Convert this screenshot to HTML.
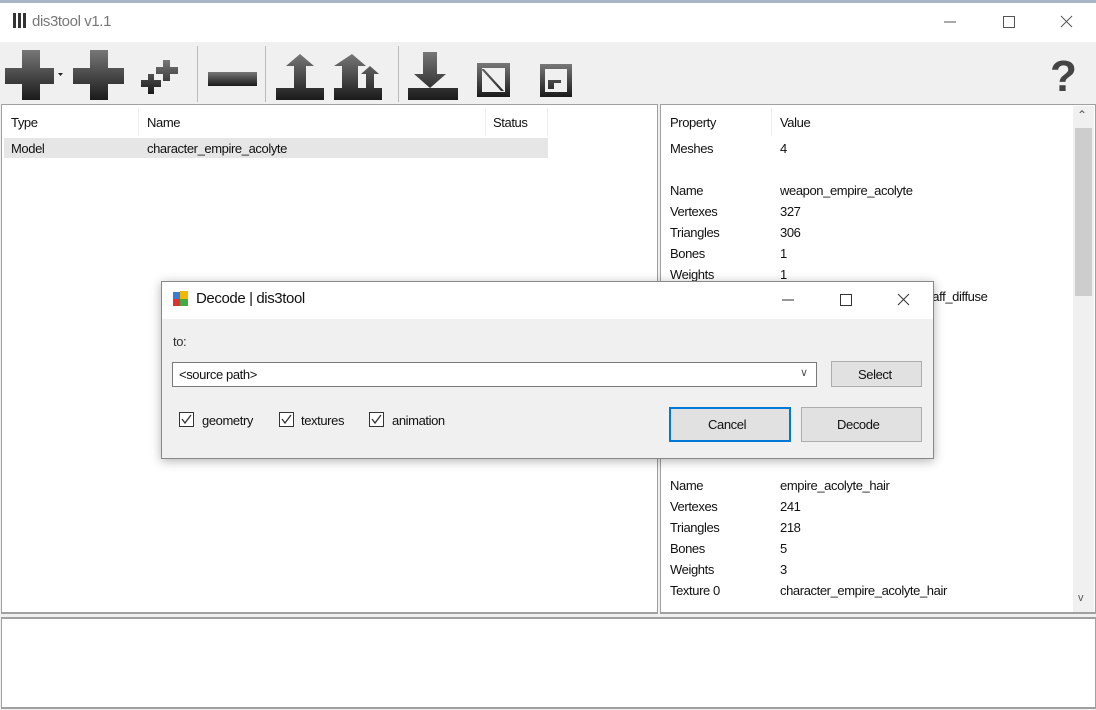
<!DOCTYPE html>
<html><head><meta charset="utf-8"><style>
*{box-sizing:border-box;margin:0;padding:0}
body{width:1096px;height:710px;overflow:hidden;background:#f0f0f0;font-family:"Liberation Sans",sans-serif;font-size:13px;color:#111;position:relative;letter-spacing:-0.4px}
.abs{position:absolute}
.t{position:absolute;white-space:nowrap}
</style></head><body>
<div class="abs" style="left:0;top:0;width:1096px;height:3px;background:#a9b6c6"></div>
<div class="abs" style="left:0;top:3px;width:1096px;height:39px;background:#fff"></div>
<div class="abs" style="left:13px;top:13px;width:3px;height:15px;background:#333"></div>
<div class="abs" style="left:18px;top:13px;width:3px;height:15px;background:#333"></div>
<div class="abs" style="left:23px;top:13px;width:3px;height:15px;background:#333"></div>
<div class="t" style="left:32px;top:13px;font-size:15px;color:#777">dis3tool v1.1</div>
<svg class="abs" style="left:930px;top:10px" width="150" height="26">
<line x1="14" y1="12" x2="26" y2="12" stroke="#555"/>
<rect x="73.5" y="6.5" width="11" height="11" fill="none" stroke="#555"/>
<path d="M131 6 L142 17 M142 6 L131 17" stroke="#555"/>
</svg>
<!-- toolbar -->
<svg class="abs" style="left:0;top:42px" width="1096" height="62">
<defs><linearGradient id="g" x1="0" y1="0" x2="0" y2="1"><stop offset="0" stop-color="#777"/><stop offset="1" stop-color="#1a1a1a"/></linearGradient></defs>
<g fill="url(#g)">
<path d="M22 8h18v18h14v16h-14v16h-18v-16h-17v-16h17z"/>
<path d="M90 8h18v18h16v16h-16v16h-18v-16h-17v-16h17z"/>
<path d="M148 32h6v6h7v7h-7v7h-6v-7h-7v-7h7zM163 18h7v7h8v7h-8v7h-7v-7h-7v-7h7z"/>
<rect x="208" y="30" width="49" height="14"/>
<path d="M300 12l14 12h-8v22h18v12h-48v-12h18v-22h-8z"/>
<path d="M352 12l14 12h-8v22h8v-14h-5l9-8 9 8h-5v14h8v12h-48v-12h8v-22h-8z"/>
<path d="M423 10h14v22h9l-16 14-16-14h9z M408 46h50v12h-50z"/>
<path d="M477 21h33v34h-33z M482 26v24h23v-24z M484 27l20 22h-3l-20-22z"/>
<path d="M540 22h32v33h-32z M545 27v23h22v-23z M548 38v9h6v-6h7v-3z"/>
</g>
<path d="M58 31h5l-2.5 3z" fill="#222"/>
<line x1="197.5" y1="4" x2="197.5" y2="60" stroke="#bbb"/>
<line x1="265.5" y1="4" x2="265.5" y2="60" stroke="#bbb"/>
<line x1="398.5" y1="4" x2="398.5" y2="60" stroke="#bbb"/>
<text x="1050" y="49" font-family="Liberation Sans" font-weight="bold" font-size="44" fill="#444">?</text>
</svg>
<!-- left panel -->
<div class="abs" style="left:1px;top:104px;width:657px;height:510px;background:#fff;border:1px solid #a0a0a0;border-bottom:2px solid #a0a0a0"></div>
<div class="abs" style="left:138px;top:108px;width:1px;height:28px;background:#eee"></div>
<div class="abs" style="left:485px;top:108px;width:1px;height:28px;background:#eee"></div>
<div class="abs" style="left:547px;top:108px;width:1px;height:28px;background:#eee"></div>
<div class="t" style="left:11px;top:115px">Type</div>
<div class="t" style="left:147px;top:115px">Name</div>
<div class="t" style="left:493px;top:115px">Status</div>
<div class="abs" style="left:4px;top:138px;width:544px;height:20px;background:#e6e6e6"></div>
<div class="t" style="left:11px;top:141px">Model</div>
<div class="t" style="left:147px;top:141px">character_empire_acolyte</div>
<!-- right panel -->
<div class="abs" style="left:660px;top:104px;width:436px;height:510px;background:#fff;border:1px solid #a0a0a0;border-bottom:2px solid #a0a0a0"></div>
<div class="abs" style="left:1073px;top:106px;width:21px;height:506px;background:#f0f0f0"></div>
<div class="abs" style="left:1075px;top:128px;width:17px;height:168px;background:#cdcdcd"></div>
<div class="t" style="left:1077px;top:108px;font-size:12px;color:#555">&#8963;</div>
<div class="t" style="left:1078px;top:592px;font-size:11px;color:#555">v</div>
<div class="abs" style="left:771px;top:108px;width:1px;height:28px;background:#eee"></div>
<div class="t" style="left:670px;top:115px">Property</div><div class="t" style="left:780px;top:115px">Value</div>
<div class="t" style="left:670px;top:141px">Meshes</div><div class="t" style="left:780px;top:141px">4</div>
<div class="t" style="left:670px;top:183px">Name</div><div class="t" style="left:780px;top:183px">weapon_empire_acolyte</div>
<div class="t" style="left:670px;top:204px">Vertexes</div><div class="t" style="left:780px;top:204px">327</div>
<div class="t" style="left:670px;top:225px">Triangles</div><div class="t" style="left:780px;top:225px">306</div>
<div class="t" style="left:670px;top:246px">Bones</div><div class="t" style="left:780px;top:246px">1</div>
<div class="t" style="left:670px;top:267px">Weights</div><div class="t" style="left:780px;top:267px">1</div>
<div class="t" style="left:923px;top:289px">staff_diffuse</div>
<div class="t" style="left:670px;top:478px">Name</div><div class="t" style="left:780px;top:478px">empire_acolyte_hair</div>
<div class="t" style="left:670px;top:499px">Vertexes</div><div class="t" style="left:780px;top:499px">241</div>
<div class="t" style="left:670px;top:520px">Triangles</div><div class="t" style="left:780px;top:520px">218</div>
<div class="t" style="left:670px;top:541px">Bones</div><div class="t" style="left:780px;top:541px">5</div>
<div class="t" style="left:670px;top:562px">Weights</div><div class="t" style="left:780px;top:562px">3</div>
<div class="t" style="left:670px;top:583px">Texture 0</div><div class="t" style="left:780px;top:583px">character_empire_acolyte_hair</div>
<!-- bottom -->
<div class="abs" style="left:1px;top:617px;width:1095px;height:92px;background:#fff;border:1px solid #a0a0a0;border-top:2px solid #a0a0a0;border-bottom:2px solid #a0a0a0"></div>
<!-- dialog -->
<div class="abs" style="left:161px;top:281px;width:773px;height:178px;background:#f0f0f0;border:1px solid #888;box-shadow:0 2px 10px rgba(0,0,0,.3)"></div>
<div class="abs" style="left:162px;top:282px;width:771px;height:37px;background:#fff"></div>
<svg class="abs" style="left:172px;top:290px" width="18" height="18"><rect x="1" y="2" width="7" height="7" fill="#3a7bd5"/><rect x="8" y="1" width="8" height="8" fill="#f0b800"/><rect x="1" y="9" width="7" height="7" fill="#d33"/><rect x="8" y="9" width="8" height="7" fill="#4a4"/></svg>
<div class="t" style="left:196px;top:290px;font-size:15px">Decode | dis3tool</div>
<svg class="abs" style="left:770px;top:290px" width="150" height="20"><line x1="12" y1="10" x2="24" y2="10" stroke="#333"/><rect x="70.5" y="4.5" width="11" height="11" fill="none" stroke="#333"/><path d="M128 4l11 11M139 4l-11 11" stroke="#333"/></svg>
<div class="t" style="left:173px;top:334px;color:#333">to:</div>
<div class="abs" style="left:172px;top:362px;width:645px;height:25px;background:#fff;border:1px solid #7a7a7a"></div>
<div class="t" style="left:179px;top:367px">&lt;source path&gt;</div>
<div class="t" style="left:800px;top:366px;font-size:11px;color:#555">&#8744;</div>
<div class="abs" style="left:831px;top:361px;width:91px;height:26px;background:#e1e1e1;border:1px solid #adadad"></div>
<div class="t" style="left:858px;top:367px">Select</div>
<svg class="abs" style="left:178px;top:411px" width="290" height="20">
<g fill="#fff" stroke="#333"><rect x="1.5" y="1.5" width="14" height="14"/><rect x="101.5" y="1.5" width="14" height="14"/><rect x="191.5" y="1.5" width="14" height="14"/></g>
<g fill="none" stroke="#333" stroke-width="1.3"><path d="M4 8l3 4 6-8"/><path d="M104 8l3 4 6-8"/><path d="M194 8l3 4 6-8"/></g>
</svg>
<div class="t" style="left:202px;top:413px">geometry</div>
<div class="t" style="left:301px;top:413px">textures</div>
<div class="t" style="left:392px;top:413px">animation</div>
<div class="abs" style="left:669px;top:407px;width:122px;height:35px;background:#e1e1e1;border:2px solid #0078d7"></div>
<div class="t" style="left:708px;top:417px">Cancel</div>
<div class="abs" style="left:801px;top:407px;width:121px;height:35px;background:#e1e1e1;border:1px solid #adadad"></div>
<div class="t" style="left:837px;top:417px">Decode</div>
</body></html>
